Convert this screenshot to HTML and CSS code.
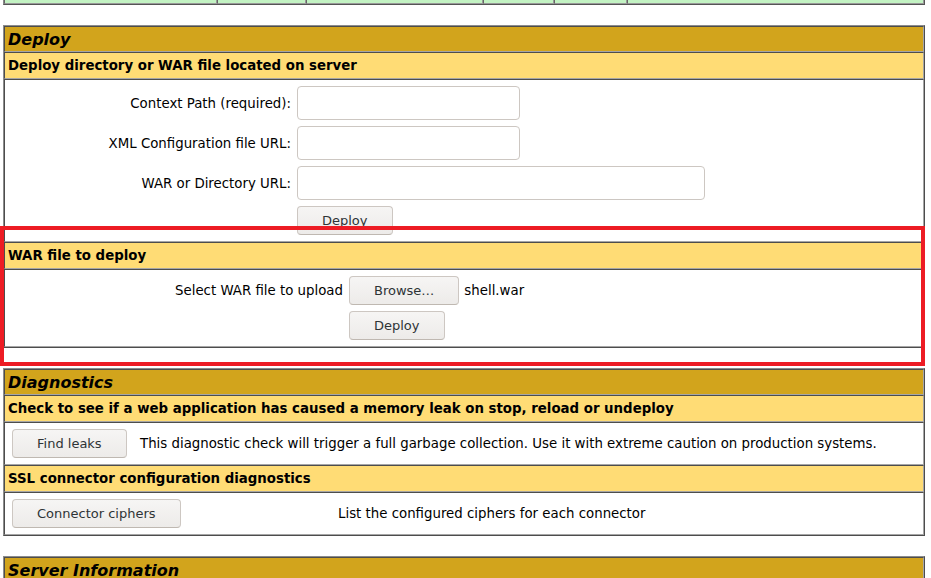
FILE: index.html
```html
<!DOCTYPE html>
<html>
<head>
<meta charset="utf-8">
<link rel="stylesheet" href="styles.css">
</head>
<body>
<div class="page">
  <div class="apps">
    <div class="apps-cell c1"></div>
    <div class="apps-cell c2"></div>
    <div class="apps-cell c3"></div>
    <div class="apps-cell c4"></div>
    <div class="apps-cell c5"></div>
    <div class="apps-cell c6"></div>
  </div>

  <table class="box">
    <tr><td class="title">Deploy</td></tr>
    <tr><td class="header">Deploy directory or WAR file located on server</td></tr>
    <tr>
      <td class="body">
        <div class="form-grid deploy-grid">
          <div class="lbl">Context Path (required):</div>
          <div class="fld"><input class="text short" type="text"></div>
          <div class="lbl">XML Configuration file URL:</div>
          <div class="fld"><input class="text short" type="text"></div>
          <div class="lbl">WAR or Directory URL:</div>
          <div class="fld"><input class="text long" type="text"></div>
          <div class="lbl"></div>
          <div class="fld"><button class="btn">Deploy</button></div>
        </div>
      </td>
    </tr>
    <tr><td class="header">WAR file to deploy</td></tr>
    <tr>
      <td class="body">
        <div class="form-grid upload-grid">
          <div class="lbl">Select WAR file to upload</div>
          <div class="fld file"><button class="btn">Browse…</button><span class="fname">shell.war</span></div>
          <div class="lbl"></div>
          <div class="fld"><button class="btn">Deploy</button></div>
        </div>
      </td>
    </tr>
  </table>

  <table class="box">
    <tr><td class="title">Diagnostics</td></tr>
    <tr><td class="header">Check to see if a web application has caused a memory leak on stop, reload or undeploy</td></tr>
    <tr>
      <td class="body">
        <div class="diag-row leaks">
          <div class="fld"><button class="btn">Find leaks</button></div>
          <div class="desc">This diagnostic check will trigger a full garbage collection. Use it with extreme caution on production systems.</div>
        </div>
      </td>
    </tr>
    <tr><td class="header">SSL connector configuration diagnostics</td></tr>
    <tr>
      <td class="body">
        <div class="diag-row ciphers">
          <div class="fld"><button class="btn">Connector ciphers</button></div>
          <div class="desc">List the configured ciphers for each connector</div>
        </div>
      </td>
    </tr>
  </table>

  <table class="box">
    <tr><td class="title">Server Information</td></tr>
    <tr><td class="header">Tomcat Version</td></tr>
  </table>

  <div class="highlight"></div>
</div>
</body>
</html>
```
FILE: styles.css
```css
html, body {
  margin: 0;
  padding: 0;
  background: #ffffff;
}
body {
  font-family: "DejaVu Sans", sans-serif;
  font-size: 16px;
  color: #000;
  overflow: hidden;
  height: 578px;
}
.page {
  position: relative;
  width: 922px;
  padding-left: 3px;
}

/* tail of the applications table */
.apps {
  display: flex;
  height: 5px;
  border-bottom: 1px solid #555;
  border-left: 1px solid #888;
  border-right: 1px solid #555;
  box-sizing: border-box;
}
.apps-cell {
  background: #c3f3c3;
  border-left: 1px solid #666;
  border-right: 1px solid #999;
  border-bottom: 1px solid #999;
  box-sizing: border-box;
}
.apps-cell.c1 { width: 213px; }
.apps-cell.c2 { width: 89px; }
.apps-cell.c3 { width: 177px; }
.apps-cell.c4 { width: 71px; }
.apps-cell.c5 { width: 73px; }
.apps-cell.c6 { flex: 1; }

.box {
  width: 922px;
  margin-top: 20px;
  border-spacing: 0;
  border-collapse: separate;
  border: 1px solid;
  border-color: #8c8c8c #4d4d4d #4d4d4d #8c8c8c;
}
.box td {
  border: 1px solid;
  border-color: #4d4d4d #a6a6a6 #a6a6a6 #4d4d4d;
  padding: 3px;
  line-height: 19px;
}
.box td.title {
  background: #d2a41c;
  font-weight: bold;
  font-style: italic;
  font-size: 16px;
  text-align: left;
  padding-bottom: 2px;
}
.header {
  background: #ffdc75;
  font-weight: bold;
  font-size: 13.33px;
  text-align: left;
}
.body {
  background: #fff;
}

.form-grid {
  display: grid;
  font-size: 13.33px;
}
.deploy-grid {
  grid-template-columns: 286px 1fr;
  grid-template-rows: 40px 40px 40px 35px;
}
.upload-grid {
  grid-template-columns: 338px 1fr;
  grid-template-rows: 35px 35px;
}
.lbl {
  padding: 3px;
  text-align: right;
  display: flex;
  align-items: center;
  justify-content: flex-end;
}
.fld {
  padding: 3px;
  display: flex;
  align-items: center;
}
.file .fname {
  margin-left: 5px;
}

.text {
  box-sizing: border-box;
  height: 34px;
  margin: 0;
  border: 1px solid #cdc7c2;
  border-radius: 4px;
  background: #fff;
  padding: 0 8px;
  font: 13.33px "DejaVu Sans", sans-serif;
}
.text.short { width: 223px; }
.text.long { width: 408px; }

.btn {
  box-sizing: border-box;
  height: 29px;
  margin: 0;
  padding: 0 24px;
  border: 1px solid #cdc7c2;
  border-bottom-color: #bfb8b1;
  border-radius: 4px;
  background: linear-gradient(#f6f5f4, #edebe9);
  color: #2e3436;
  font: 13px "DejaVu Sans", sans-serif;
  line-height: 27px;
}

.diag-row {
  display: grid;
  font-size: 13.33px;
}
.diag-row .fld {
  padding: 3px 3px 3px 4px;
}
.diag-row .desc {
  padding: 3px;
  display: flex;
  align-items: center;
}
.leaks { grid-template-columns: 129px 1fr; }
.ciphers { grid-template-columns: 327px 1fr; }

.highlight {
  position: absolute;
  left: 0;
  top: 226px;
  width: 925px;
  height: 140px;
  box-sizing: border-box;
  border: 4px solid #ed1c24;
  pointer-events: none;
}
```
